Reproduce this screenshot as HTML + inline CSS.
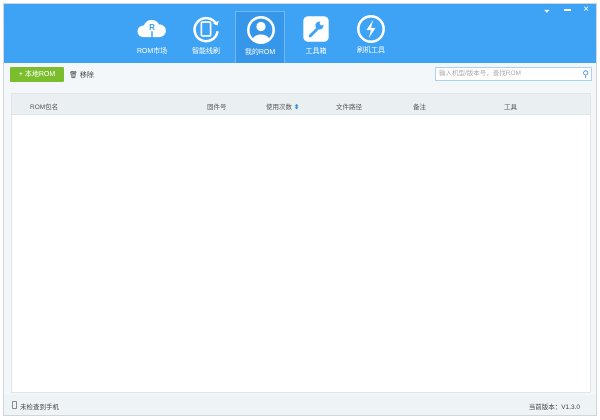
<!DOCTYPE html>
<html><head><meta charset="utf-8"><style>
*{margin:0;padding:0;box-sizing:border-box}
body{width:600px;height:420px;background:#fff;position:relative;overflow:hidden;font-family:"Liberation Sans","Noto Sans CJK SC",sans-serif;font-size:7px;color:#444}
.win{position:absolute;left:3px;top:3px;width:594px;height:413px;background:#f4f7f9;border:1px solid #d0d6da}
.hdr{position:absolute;left:0;top:0;width:592px;height:59px;background:#3ea2f5}
.tab{position:absolute;top:7px;width:50px;height:52px;text-align:center;color:#fff;font-size:7px}
.tab.sel{background:#3596ea;border:1px solid #74b9f5;border-bottom:none}
.tab svg{position:absolute;left:10px;top:3px}
.tab span{position:absolute;left:0;right:0;top:35px}
.btn{position:absolute;left:6px;top:63px;width:54px;height:15px;background:#7cbd2e;color:#fff;font-size:7px;line-height:15px;text-align:center;border-radius:1px}
.search{position:absolute;left:431px;top:63px;width:157px;height:14px;background:#fff;border:1px solid #a9d2f3;color:#aaa;font-size:6.5px;line-height:12px;padding-left:3px}
.table{position:absolute;left:7px;top:89px;width:580px;height:300px;border:1px solid #dfe5e8;background:#fff}
.th{position:absolute;left:0;top:0;width:578px;height:21px;background:#eaf0f2;border-bottom:1px solid #dfe5e8}
.th span{position:absolute;top:7px;font-size:6.5px;color:#555}
.status{position:absolute;left:0;top:391px;width:592px;height:20px;background:#eef3f6}
</style></head><body>
<div class="win">
 <div class="hdr">
  <div style="position:absolute;right:46px;top:3px;color:#fff;font-size:8px">⏷</div>
  <div style="position:absolute;right:25px;top:5px;width:7px;height:1.5px;background:#fff"></div>
  <div style="position:absolute;right:7px;top:0px;color:#fff;font-size:10px">×</div>
  <div class="tab" style="left:123px">
   <svg width="30" height="30" viewBox="0 0 26 26"><path d="M5 20a5 5 0 0 1 1-10a7 7 0 0 1 13-1a5.5 5.5 0 0 1 1 11z" fill="#fff"/><text x="13" y="14" font-size="7" font-weight="bold" fill="#3ea2f5" text-anchor="middle" font-family="Liberation Sans">R</text><path d="M13 15v8M11 21l2 2l2-2" stroke="#3ea2f5" stroke-width="1.3" fill="none"/></svg>
   <span>ROM市场</span></div>
  <div class="tab" style="left:177px">
   <svg width="30" height="30" viewBox="0 0 26 26"><path d="M22 9A10 10 0 1 0 23 15" stroke="#fff" stroke-width="2.2" fill="none"/><path d="M19 8l4 2l1-4z" fill="#fff"/><rect x="9" y="7" width="8" height="12" rx="1" stroke="#fff" stroke-width="1.4" fill="none"/></svg>
   <span>智能线刷</span></div>
  <div class="tab sel" style="left:231px">
   <svg width="30" height="30" viewBox="0 0 26 26"><circle cx="13" cy="13" r="11" stroke="#fff" stroke-width="2.2" fill="none"/><circle cx="13" cy="10" r="4" fill="#fff"/><path d="M6 20a8 6 0 0 1 14 0a9 9 0 0 1-14 0z" fill="#fff"/></svg>
   <span>我的ROM</span></div>
  <div class="tab" style="left:287px">
   <svg width="30" height="30" viewBox="0 0 26 26"><rect x="2" y="2" width="22" height="22" rx="4" fill="#fff"/><path d="M8 19l6-6" stroke="#3ea2f5" stroke-width="2.5" stroke-linecap="round"/><circle cx="16" cy="10" r="3.5" fill="#3ea2f5"/><circle cx="18" cy="8" r="1.8" fill="#fff"/></svg>
   <span>工具箱</span></div>
  <div class="tab" style="left:342px">
   <svg width="30" height="30" viewBox="0 0 26 26"><circle cx="13" cy="13" r="11" stroke="#fff" stroke-width="2.2" fill="none"/><path d="M15 5l-6 9h4l-2 7l6-9h-4z" fill="#fff"/></svg>
   <span style="top:34px">刷机工具</span></div>
 </div>
 <div class="btn">+ 本地ROM</div>
 <div style="position:absolute;left:65px;top:66px;font-size:7px;color:#444">🗑 移除</div>
 <div class="search">输入机型/版本号，查找ROM<span style="position:absolute;right:2px;top:0;color:#3a8fd8;font-size:9px">⚲</span></div>
 <div class="table"><div class="th">
  <span style="left:18px">ROM包名</span><span style="left:195px">固件号</span><span style="left:254px">使用次数 <b style="color:#3a8fd8">⬍</b></span><span style="left:324px">文件路径</span><span style="left:401px">备注</span><span style="left:492px">工具</span>
 </div></div>
 <div class="status">
  <span style="position:absolute;left:8px;top:6px;width:5px;height:8px;border:1px solid #888;border-radius:1px"></span>
  <span style="position:absolute;left:16px;top:6px;font-size:6.5px">未检查到手机</span>
  <span style="position:absolute;right:16px;top:6px;font-size:6.5px">当前版本：V1.3.0</span>
 </div>
</div>
</body></html>
